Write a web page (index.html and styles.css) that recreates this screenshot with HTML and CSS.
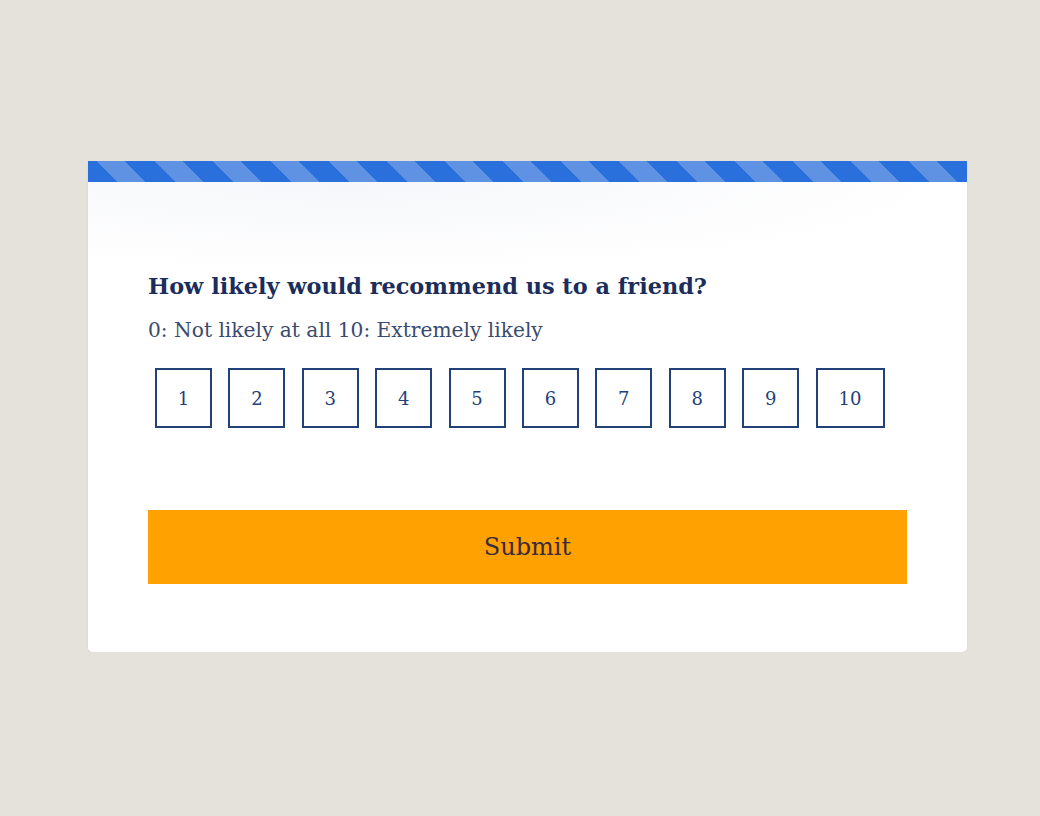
FILE: index.html
```html
<!DOCTYPE html>
<html lang="en">
<head>
    <meta charset="UTF-8">
    <title>Survey</title>
    <link rel="stylesheet" href="styles.css">
</head>
<body>
<div class="card">
    <div class="stripes"></div>
    <div class="card-body">
        <h2 class="question">How likely would recommend us to a friend?</h2>
        <p class="hint">0: Not likely at all 10: Extremely likely</p>
        <div class="scale">
            <button class="score">1</button>
            <button class="score">2</button>
            <button class="score">3</button>
            <button class="score">4</button>
            <button class="score">5</button>
            <button class="score">6</button>
            <button class="score">7</button>
            <button class="score">8</button>
            <button class="score">9</button>
            <button class="score wide">10</button>
        </div>
        <button class="submit">Submit</button>
    </div>
</div>
</body>
</html>
```

FILE: styles.css
```css
body {
    margin: 0;
    padding: 161px 0 0 88px;
    background-color: #e5e2db;
    font-family: "DejaVu Serif", serif;
}

.card {
    width: 879px;
    background-color: #fff;
    border-radius: 0 0 5px 5px;
    box-shadow: 0 1px 2px rgba(0, 0, 0, 0.08);
    overflow: hidden;
}

.stripes {
    height: 21px;
    background: repeating-linear-gradient(
        45deg,
        #2a70dc 0,
        #2a70dc 21px,
        #5f92e3 21px,
        #5f92e3 41px
    );
}

.card-body {
    padding: 91px 60px 68px 60px;
    background: radial-gradient(ellipse 70% 90px at 30% 0, #f6f7fa, #fff);
}

.question {
    margin: 0;
    font-size: 22.4px;
    font-weight: bold;
    color: #1b2d5c;
}

.hint {
    margin: 19px 0 0 0;
    font-size: 20.2px;
    color: #3b4a6e;
}

.scale {
    display: flex;
    gap: 16.4px;
    padding-left: 7px;
    margin-top: 26px;
}

.score {
    width: 57px;
    height: 60px;
    background: #fff;
    border: 2px solid #22407a;
    font-family: "DejaVu Serif", serif;
    font-size: 18px;
    color: #22407a;
    padding: 0;
}

.score.wide {
    width: 69px;
}

.submit {
    display: block;
    width: 100%;
    height: 74px;
    margin-top: 82px;
    border: none;
    background-color: #ffa100;
    font-family: "DejaVu Serif", serif;
    font-size: 24px;
    color: #3b2b40;
}
```
